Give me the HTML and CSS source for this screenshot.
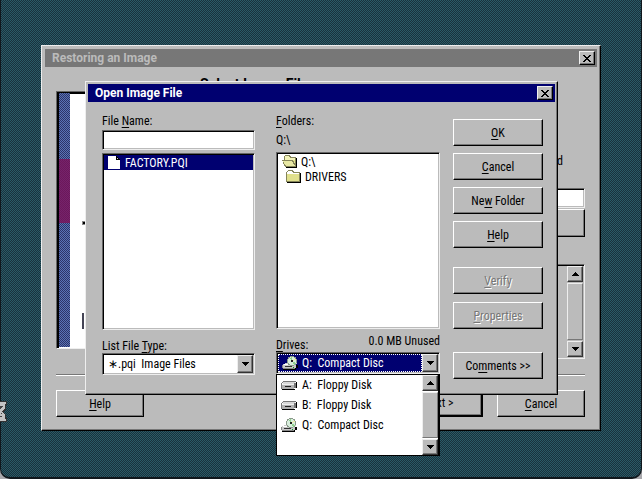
FILE: index.html
```html
<!DOCTYPE html>
<html lang="en">
<head>
<meta charset="utf-8">
<title>Restoring an Image</title>
<link rel="stylesheet" href="styles.css">
</head>
<body>
<svg class="defs" aria-hidden="true">
  <symbol id="close" viewBox="0 0 8 7"><path d="M0 0h2v1h1v1h2V1h1V0h2v1H7v1H6v1H5v1h1v1h1v1h1v1H6V6H5V5H3v1H2v1H0V6h1V5h1V4h1V3H2V2H1V1H0z"/></symbol>
  <symbol id="down" viewBox="0 0 7 4"><path d="M0 0h7v1H6v1H5v1H4v1H3V3H2V2H1V1H0z"/></symbol>
  <symbol id="up" viewBox="0 0 7 4"><path d="M3 0h1v1h1v1h1v1h1v1H0V3h1V2h1V1h1z"/></symbol>
  <symbol id="cd" viewBox="0 0 16 14">
    <path fill="#000" d="M2 9h14v3h-2v2H1v-1h1z"/>
    <path fill="#c8c8c8" d="M3 7h12v1H3zM1 8h13v4H1z"/>
    <path fill="#888" d="M0 9h1v3H0zM1 12h12v1H1z"/>
    <path fill="#fff" d="M2 8h11v1H2z"/>
    <path fill="#333" d="M3 10h7v1H3z"/>
    <circle cx="10" cy="5" r="5" fill="#8a9a8a"/>
    <circle cx="10" cy="5" r="4" fill="#d9eedd"/>
    <path fill="#8fd08f" d="M10 5 7 2l3-1zM10 5l4 2-2 2z"/>
    <path fill="#f1e9a0" d="M10 5l3-3 1 2z"/>
    <path fill="#222" d="M9 4h2v2H9z"/>
    <path fill="#00a020" d="M11 11h1v1h-1z"/>
  </symbol>
  <symbol id="floppy" viewBox="0 0 16 9">
    <path fill="#000" d="M15 1h1v6h-1v1h-1v1H1V8h14z"/>
    <path fill="#777" d="M2 0h13v1H2zM0 2h1v6H0zM1 1h1v1H1z"/>
    <path fill="#d8d8d8" d="M2 1h12v2H2z"/>
    <path fill="#b0b0b0" d="M1 3h12v5H1z"/>
    <path fill="#777" d="M13 2h2v5h-2z"/>
    <path fill="#222" d="M4 5h6v1H4z"/>
    <path fill="#eee" d="M1 3h12v1H1z"/>
  </symbol>
  <symbol id="folder" viewBox="0 0 15 13">
    <path fill="#000" d="M14 3h1v10H1v-1h13z"/>
    <path fill="#85855a" d="M2 0h4l2 2h6v10H0V2z"/>
    <path fill="#fff" d="M2 1h4l1 2h6v1H1V2z"/>
    <path fill="#e0e08c" d="M1 4h12v7H1z"/>
  </symbol>
  <symbol id="folder-open" viewBox="0 0 15 13">
    <path fill="#000" d="M13 3h2v10H4v-1h9z"/>
    <path fill="#85855a" d="M3 0h4l2 2h5v10H3L0 5h2V1z"/>
    <path fill="#f3f3b8" d="M3 1h4l1 2h5v2H3z"/>
    <path fill="#e8e8a4" d="M1 6h9l3 5H4z"/>
    <path fill="#e4e48c" d="M11 5h2v4z"/>
  </symbol>
  <symbol id="page" viewBox="0 0 12 13">
    <path fill="#fff" d="M0 0h8v4h4v9H0z"/>
    <path fill="#000" d="M8 0h1v1h1v1h1v1h1v1H8z"/>
    <path fill="#ccc" d="M9 2h1v1H9z"/>
  </symbol>
</svg>

<main class="desktop">
  <svg class="hourglass" viewBox="0 0 7 21" aria-hidden="true">
    <path fill="#333" d="M0 0h7v4H6v4L4 10v1l2 3v3h1v4H0z"/>
    <path fill="#c4c4c4" d="M0 1h6v2H0zM0 3h5v4L2 10v1l3 3v4H0zM0 18h6v2H0z"/>
    <path fill="#444" d="M0 5h3v1H2v1H1v1H0zM1 12h1v1H1zM0 15h2v1H0z"/>
  </svg>

  <section class="window restore" aria-label="Restoring an Image">
    <header class="title inactive"><span>Restoring an Image</span>
      <button class="close" aria-label="Close"><svg width="8" height="7"><use href="#close"/></svg></button></header>
    <div class="restore-body">
      <h1 class="heading">Select Image File</h1>
      <div class="wizard">
        <div class="picture sunken">
          <div class="strip"></div>
          <svg class="art" viewBox="0 0 20 254" aria-hidden="true"><path fill="#888" d="M12 128h4v4h-4z"/><path d="M13 129h3v2h-3z"/><path fill="#445" d="M12 220h2v16h-2z"/></svg>
        </div>
        <div class="fields">
          <label class="hint" for="image">d</label>
          <input class="box" id="image" type="text">
          <button class="push browse" aria-label="Browse"></button>
          <div class="info sunken">
            <div class="scroll"><button class="arrow" aria-label="Scroll up"><svg width="7" height="4"><use href="#up"/></svg></button><span class="thumb"></span><button class="arrow" aria-label="Scroll down"><svg width="7" height="4"><use href="#down"/></svg></button></div>
          </div>
        </div>
      </div>
      <hr class="rule">
      <footer class="footer">
        <button class="push"><u>H</u>elp</button>
        <button class="push default">Next &gt;</button>
        <button class="push"><u>C</u>ancel</button>
      </footer>
    </div>
  </section>

  <section class="window open" role="dialog" aria-label="Open Image File">
    <header class="title"><span>Open Image File</span>
      <button class="close" aria-label="Close"><svg width="8" height="7"><use href="#close"/></svg></button></header>
    <div class="open-body">
      <div class="col files">
        <label for="name">File <u>N</u>ame:</label>
        <input class="box" id="name" type="text">
        <ul class="list sunken" role="listbox" aria-label="Files">
          <li class="selected" role="option" aria-selected="true"><svg width="12" height="13"><use href="#page"/></svg>FACTORY.PQI</li>
        </ul>
        <label class="lower" for="type">List File <u>T</u>ype:</label>
        <div class="combo sunken"><select id="type"><option>&lowast;.pqi&nbsp; Image Files</option></select><span class="arrow"><svg width="7" height="4"><use href="#down"/></svg></span></div>
      </div>
      <div class="col folders">
        <span><u>F</u>olders:</span>
        <span class="path">Q:\</span>
        <ul class="list sunken" role="listbox" aria-label="Folders">
          <li role="option"><svg width="15" height="13"><use href="#folder-open"/></svg>Q:\</li>
          <li class="child" role="option"><svg width="15" height="13"><use href="#folder"/></svg>DRIVERS</li>
        </ul>
        <div class="lower split"><label for="drive"><u>D</u>rives:</label><span class="unused">0.0 MB Unused</span></div>
        <div class="drives">
          <div class="combo sunken"><div class="current"><svg width="16" height="14"><use href="#cd"/></svg><select id="drive"><option>Q:&nbsp; Compact Disc</option></select></div><span class="arrow"><svg width="7" height="4"><use href="#down"/></svg></span></div>
          <div class="popup">
            <ul role="listbox" aria-label="Drives">
              <li role="option"><svg width="16" height="9"><use href="#floppy"/></svg>A:&nbsp; Floppy Disk</li>
              <li role="option"><svg width="16" height="9"><use href="#floppy"/></svg>B:&nbsp; Floppy Disk</li>
              <li role="option"><svg width="16" height="14"><use href="#cd"/></svg>Q:&nbsp; Compact Disc</li>
            </ul>
            <div class="scroll"><button class="arrow" aria-label="Scroll up"><svg width="7" height="4"><use href="#up"/></svg></button><span class="thumb"></span><button class="arrow" aria-label="Scroll down"><svg width="7" height="4"><use href="#down"/></svg></button></div>
          </div>
        </div>
      </div>
      <div class="actions">
        <button class="push"><u>O</u>K</button>
        <button class="push"><u>C</u>ancel</button>
        <button class="push">Ne<u>w</u> Folder</button>
        <button class="push"><u>H</u>elp</button>
        <button class="push group" disabled><u>V</u>erify</button>
        <button class="push" disabled><u>P</u>roperties</button>
        <button class="push comments">Co<u>m</u>ments &gt;&gt;</button>
      </div>
    </div>
  </section>
</main>
</body>
</html>
```

FILE: styles.css
```css
:root {
  --face: #bbb;
  --navy: #000070;
}
* { box-sizing: border-box; }
body {
  margin: 0;
  background: #a9a9ad;
  color: #000;
  font: 12px/14px "Roboto Condensed", Roboto, "Liberation Sans", sans-serif;
}
button, input, select { font: inherit; color: inherit; }
ul { list-style: none; margin: 0; padding: 0; }
svg { display: block; flex: none; shape-rendering: crispEdges; }
u { text-underline-offset: 2px; }
.defs { position: absolute; width: 0; height: 0; }

.desktop {
  position: relative;
  min-height: 100vh;
  border: 1px solid #10171c;
  border-top: 0;
  border-bottom-width: 2px;
  border-radius: 0 0 10px 10px;
  background: repeating-conic-gradient(#2a5a66 0 25%, #19323c 0 50%) 0 0 / 2px 2px;
}
.hourglass { position: absolute; left: -1px; top: 401px; width: 7px; height: 21px; }

.window {
  position: absolute;
  padding: 2px;
  background: var(--face);
  border: 1px solid;
  border-color: #eee #000 #000 #eee;
  box-shadow: inset -1px -1px #777;
}
.restore { left: 40px; right: 40px; top: 45px; padding: 3px; }
.open { left: 84px; right: 83px; top: 81px; }

.title {
  display: flex;
  align-items: center;
  justify-content: space-between;
  height: 18px;
  padding: 0 2px 0 7px;
  background: var(--navy);
  color: #fff;
  font: bold 12px/18px Roboto, "Liberation Sans", sans-serif;
}
.title.inactive { background: #777; color: #bbb; }
.close {
  display: grid;
  place-items: center;
  width: 16px;
  height: 14px;
  padding: 0;
  background: var(--face);
  border: 1px solid;
  border-color: #eee #000 #000 #eee;
  box-shadow: inset -1px -1px #777;
  color: #000;
}

.sunken, .box {
  background: #fff;
  border: 1px solid;
  border-color: #666 #eee #eee #666;
  box-shadow: inset 1px 1px #000, inset -1px -1px #bbb;
}
.box { width: 100%; height: 20px; padding: 0 4px; }

.push {
  width: 90px;
  height: 27px;
  padding: 0;
  background: var(--face);
  border: 1px solid;
  border-color: #fff #000 #000 #fff;
  box-shadow: inset -1px -1px #777;
  text-align: center;
}
.push:disabled { color: #777; text-shadow: 1px 1px #fff; }

.restore-body { padding: 10px 12px 10px 11px; }
.heading { margin: 0 0 0 144px; font: bold 14px/14px Roboto, "Liberation Sans", sans-serif; }
.wizard { display: flex; justify-content: space-between; gap: 20px; }
.picture { display: flex; width: 130px; height: 258px; padding: 1px; box-shadow: inset 2px 2px #000; }
.strip {
  width: 11px;
  margin-left: 1px;
  background:
    linear-gradient(#00000000 66px, #7c1058cc 66px 130px, #00000000 130px),
    repeating-conic-gradient(#5a72b4 0 25%, #2c3468 0 50%) 0 0 / 2px 2px;
}
.art { width: 20px; height: 254px; }
.fields { flex: 1; display: flex; flex-direction: column; align-items: flex-end; padding-top: 63px; }
.hint { margin-right: 22px; }
.fields .box { width: 200px; margin-top: 20px; }
.browse { height: 28px; margin-top: 1px; }
.info { display: flex; justify-content: flex-end; width: 300px; height: 95px; margin-top: 27px; padding: 1px; background: var(--face); }

.scroll { display: flex; flex-direction: column; width: 16px; }
.arrow {
  flex: none;
  display: grid;
  place-items: center;
  width: 16px;
  height: 16px;
  padding: 0;
  background: var(--face);
  border: 1px solid;
  border-color: #eee #333 #333 #eee;
  box-shadow: inset -1px -1px #777;
}
.thumb { flex: 1; margin: 1px 0; background: var(--face); border: 1px solid; border-color: #eee #777 #777 #eee; }

.rule { height: 2px; margin: 15px 0 14px; border: 0; border-top: 1px solid #777; background: #fff; }
.footer { display: flex; }
.footer .push { width: 88px; }
.footer .default { margin: 0 14px 0 auto; border-width: 1px 2px 2px 1px; }

.open-body { display: flex; padding: 12px 12px 13px 14px; }
.col { display: flex; flex-direction: column; min-width: 0; }
.files { flex: 153; margin-right: 21px; }
.folders { flex: 164; margin-right: 13px; }
.files .box { margin-top: 2px; }
.path { margin-top: 5px; }
.list { height: 177px; margin-top: 3px; padding: 1px; }
.folders .list { margin-top: 5px; }
.list li { display: flex; align-items: center; gap: 4px; height: 15px; padding-left: 4px; }
.list .selected { gap: 5px; background: var(--navy); color: #fff; }
.list .child { padding-left: 8px; }
.lower { margin: 9px 0 0; }
.split { display: flex; justify-content: space-between; white-space: nowrap; }
.unused { margin-top: -4px; }
.combo { display: flex; height: 22px; padding: 1px; }
.combo select { flex: 1; min-width: 0; padding: 0 4px; appearance: none; border: 0; background: none; }
.combo .arrow { height: 18px; }
.current { flex: 1; display: flex; align-items: center; min-width: 0; padding-left: 3px; background: var(--navy); color: #fff; border: 1px dotted #fff; }
.drives { position: relative; }
.popup {
  position: absolute;
  inset: 100% 0 auto;
  display: flex;
  border: 1px solid #000;
  border-right-width: 2px;
  background: #fff;
}
.popup ul { flex: 1; padding-bottom: 20px; }
.popup li { display: flex; align-items: center; gap: 5px; height: 20px; padding-left: 4px; }

.actions { display: flex; flex-direction: column; gap: 7px; padding-top: 5px; }
.actions .group { margin: 12px 0 1px; }
.actions .comments { margin-top: 16px; }
```
